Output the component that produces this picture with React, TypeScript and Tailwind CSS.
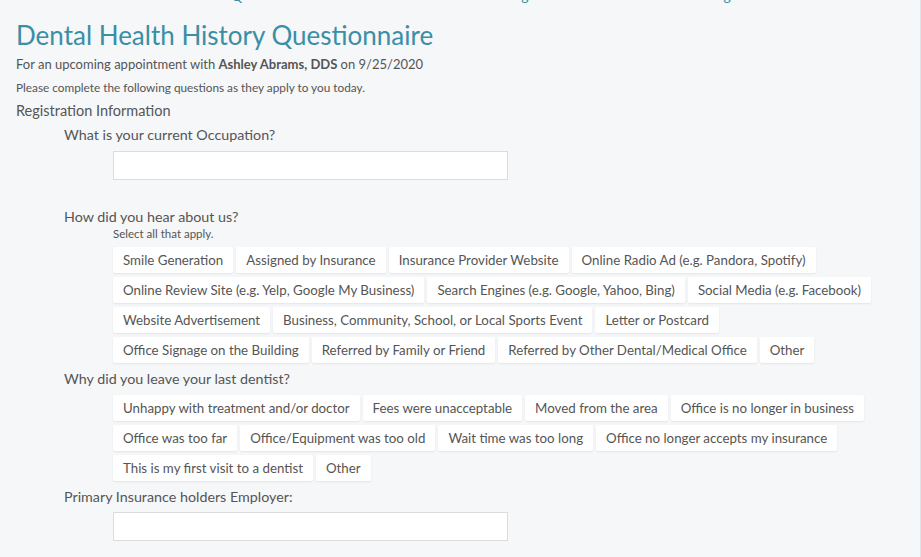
import React from 'react';

const hearOptions = [
  'Smile Generation',
  'Assigned by Insurance',
  'Insurance Provider Website',
  'Online Radio Ad (e.g. Pandora, Spotify)',
  'Online Review Site (e.g. Yelp, Google My Business)',
  'Search Engines (e.g. Google, Yahoo, Bing)',
  'Social Media (e.g. Facebook)',
  'Website Advertisement',
  'Business, Community, School, or Local Sports Event',
  'Letter or Postcard',
  'Office Signage on the Building',
  'Referred by Family or Friend',
  'Referred by Other Dental/Medical Office',
  'Other',
];

const leaveOptions = [
  'Unhappy with treatment and/or doctor',
  'Fees were unacceptable',
  'Moved from the area',
  'Office is no longer in business',
  'Office was too far',
  'Office/Equipment was too old',
  'Wait time was too long',
  'Office no longer accepts my insurance',
  'This is my first visit to a dentist',
  'Other',
];

const Chip: React.FC<{ label: string }> = ({ label }) => (
  <button
    type="button"
    className="h-[26px] rounded-[2px] bg-white px-[10px] text-[13.3px] leading-[26px] text-[#555] shadow-[0_1px_2px_rgba(0,0,0,0.08)]"
  >
    {label}
  </button>
);

const ChipGroup: React.FC<{ options: string[] }> = ({ options }) => (
  <div className="ml-[97px] flex max-w-[760px] flex-wrap gap-x-[3px] gap-y-[4px]">
    {options.map((o, i) => (
      <Chip key={i} label={o} />
    ))}
  </div>
);

const Question: React.FC<{ children: React.ReactNode }> = ({ children }) => (
  <p className="ml-[48px] text-[14.3px] leading-[20px] text-[#555]">{children}</p>
);

const TextBox: React.FC = () => (
  <input
    type="text"
    className="ml-[97px] block h-[29px] w-[395px] border border-[#dcdcdc] bg-white px-2 text-[13px] outline-none"
  />
);

export default function App() {
  return (
    <div
      className="min-h-[557px] w-full border-r border-[#dfe3e6] bg-[#f5f7f9] text-[#555]"
      style={{ fontFamily: 'Lato, "Open Sans", sans-serif' }}
    >
      {/* tails of the nav links scrolled just out of view */}
      <div className="h-[3px] overflow-hidden text-[14px] leading-[14px] text-[#3a8ea5]">
        <div className="-mt-[11px] flex">
          <span className="ml-[231px]">Q</span>
          <span className="ml-[279px]">g</span>
          <span className="ml-[195px]">g</span>
        </div>
      </div>

      <div className="px-[16px] pt-[15px]">
        <h1 className="text-[26px] leading-[34px] text-[#3a8ea5]">Dental Health History Questionnaire</h1>
        <p className="mt-[3px] text-[13px] leading-[18px]">
          For an upcoming appointment with <span className="font-bold">Ashley Abrams, DDS</span> on 9/25/2020
        </p>
        <p className="mt-[7px] text-[11.8px] leading-[16px]">Please complete the following questions as they apply to you today.</p>
        <p className="mt-[5px] text-[14.5px] leading-[20px]">Registration Information</p>

        <div className="mt-[4px]">
          <Question>What is your current Occupation?</Question>
          <div className="mt-[6px]">
            <TextBox />
          </div>
        </div>

        <div className="mt-[27px]">
          <Question>How did you hear about us?</Question>
          <p className="ml-[97px] text-[11.5px] leading-[14px]">Select all that apply.</p>
          <div className="mt-[6px]">
            <ChipGroup options={hearOptions} />
          </div>
        </div>

        <div className="mt-[6px]">
          <Question>Why did you leave your last dentist?</Question>
          <div className="mt-[6px]">
            <ChipGroup options={leaveOptions} />
          </div>
        </div>

        <div className="mt-[6px]">
          <Question>Primary Insurance holders Employer:</Question>
          <div className="mt-[5px]">
            <TextBox />
          </div>
        </div>
      </div>
    </div>
  );
}
